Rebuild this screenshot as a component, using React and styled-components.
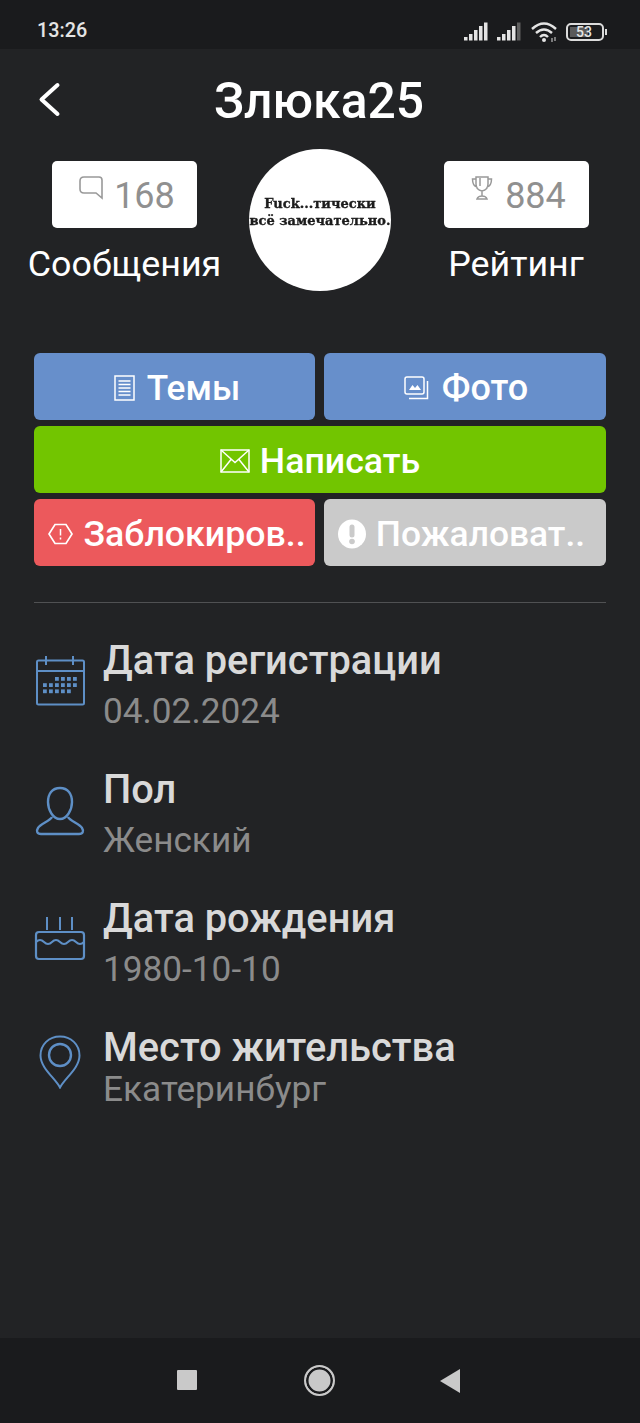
import React from "react";
import styled, { createGlobalStyle } from "styled-components";

const Global = createGlobalStyle`
  html, body { margin: 0; padding: 0; background: #222325; }
  * { box-sizing: border-box; }
  body { font-family: Roboto, "Liberation Sans", sans-serif; }
`;

const Page = styled.div`
  width: 640px; height: 1423px; display: flex; flex-direction: column;
  background: #222325; overflow: hidden;
`;
const StatusBar = styled.div`
  height: 49px; flex: none; background: #1a1b1d; display: flex; align-items: center;
  justify-content: space-between; padding: 0 32px 0 37px; color: #e4e4e4;
`;
const Clock = styled.span`font-size: 19.8px; font-weight: 500; position: relative; top: 6px;`;
const StatusIcons = styled.svg`position: relative; top: 6px; display: block;`;
const Header = styled.header`
  height: 100px; flex: none; display: flex; align-items: center; justify-content: center;
  padding: 4px 2px 0 0;
  position: relative;
`;
const BackButton = styled.svg`position: absolute; left: 37px; top: 31px;`;
const Title = styled.h1`margin: 0; font-size: 49.8px; line-height: 56px; font-weight: 500; color: #fff;`;
const Stats = styled.section`
  height: 142px; flex: none; display: grid; grid-template-columns: 249px 142px 249px;
`;
const StatColumn = styled.div`
  display: flex; flex-direction: column; align-items: center; padding-top: 12px;
  padding-left: ${p => p.$left}px;
`;
const StatCard = styled.div`
  width: 145px; height: 67px; background: #fff; border-radius: 5px; display: flex;
  align-items: center; justify-content: center; gap: ${p => p.$gap}px; color: #909090; font-size: 36px;
  padding: 3px 0 0 ${p => p.$pad}px;
`;
const StatIcon = styled.svg`position: relative; top: -8px; flex: none;`;
const StatLabel = styled.div`margin-top: 16px; font-size: 35.8px; line-height: 40px; color: #fff; white-space: nowrap;`;
const Avatar = styled.div`
  width: 142px; height: 142px; border-radius: 50%; background: #fff; overflow: hidden;
  display: flex; flex-direction: column; align-items: center; padding-top: 46px;
  color: #1c1c1c; font-family: "DejaVu Serif", "Liberation Serif", serif; font-weight: 700;
  font-size: 13px; line-height: 17px; white-space: nowrap;
`;
const AvatarLine = styled.span`filter: blur(0.75px); -webkit-text-stroke: 0.35px #1c1c1c;`;
const Buttons = styled.section`
  margin: 62px 34px 0; display: grid; grid-template-columns: 281px 282px; column-gap: 9px; row-gap: 6px;
`;
const Button = styled.div`
  grid-column: ${p => (p.$wide ? "1 / -1" : "auto")};
  height: 67px; border-radius: 6px; background: ${p => p.$bg}; color: #fff;
  display: flex; align-items: center; justify-content: center; gap: ${p => p.$gap || 10}px;
  font-size: ${p => p.$size || 35.7}px; font-weight: 500; white-space: nowrap; padding-top: 2px;
  padding-left: ${p => p.$shiftL || 0}px; padding-right: ${p => p.$shiftR || 0}px;
`;
const Divider = styled.hr`
  margin: 36px 34px 0; height: 1px; border: 0; background: #505153; flex: none;
`;
const InfoList = styled.section`margin-top: 29px; padding: 0 34px;`;
const InfoRow = styled.div`
  height: ${p => p.$h || 129}px; display: grid; grid-template-columns: 69px 1fr; align-items: start;
`;
const InfoIcon = styled.svg`display: block; margin-top: ${p => p.$top}px; margin-left: ${p => p.$left || 0}px;`;
const InfoText = styled.div`display: flex; flex-direction: column;`;
const InfoTitle = styled.div`font-size: 39.8px; line-height: 56px; font-weight: 500; color: #d9d9d9; white-space: nowrap; padding-top: 1px;`;
const InfoValue = styled.div`
  font-size: 35.2px; line-height: 44px; color: #8b8b8b; margin-top: ${p => p.$mt ?? 0}px;
`;
const NavBar = styled.nav`
  margin-top: auto; height: 85px; flex: none; background: #1a1b1d; position: relative;
`;
const NavSquare = styled.div`
  position: absolute; left: 177px; top: 32px; width: 20px; height: 20px; background: #c9c9c9; border-radius: 1px;
`;
const NavCircle = styled.div`
  position: absolute; left: 304px; top: 27px; width: 31px; height: 31px; border-radius: 50%;
  background: #c9c9c9; border: 2px solid #c9c9c9; box-shadow: inset 0 0 0 2.5px #1a1b1d;
`;
const NavBack = styled.svg`position: absolute; left: 439px; top: 30px;`;

const Icon = ({ children, w, h = w, top, left, color = "#5e8fc6", sw = 2 }) => (
  <InfoIcon width={w} height={h} viewBox={`0 0 ${w} ${h}`} fill="none" stroke={color} strokeWidth={sw} $top={top} $left={left}>{children}</InfoIcon>
);

const dots = [];
[[20, 26, 32, 38], [8, 14, 20, 26, 32, 38], [8, 14, 20, 26, 32]].forEach((xs, r) =>
  xs.forEach(x => dots.push(<rect key={`${r}-${x}`} x={x} y={21 + r * 6.2} width="3.8" height="3.8" fill="#5e8fc6" stroke="none" />))
);

const BtnIcon = ({ w, h, children, fill = "none" }) => (
  <svg width={w} height={h} viewBox={`0 0 ${w} ${h}`} fill={fill} stroke="#fff" strokeWidth="1.5" style={{ flex: "none" }}>{children}</svg>
);

export default function App() {
  return (
    <Page>
      <Global />
      <StatusBar>
        <Clock>13:26</Clock>
        <StatusIcons width="144" height="24" viewBox="0 0 144 24">
          <g fill="#e4e4e4">
            <rect x="0" y="18" width="3.5" height="3.5" /><rect x="5" y="15" width="3.5" height="6.5" /><rect x="10" y="11" width="3.5" height="10.5" /><rect x="15" y="7" width="3.5" height="14.5" /><rect x="20" y="3.5" width="3.5" height="18" />
            <rect x="33" y="18" width="3.5" height="3.5" /><rect x="38" y="15" width="3.5" height="6.5" /><rect x="43" y="11" width="3.5" height="10.5" /><rect x="48" y="7" width="3.5" height="14.5" />
            <rect x="53" y="3.5" width="3.5" height="18" fill="#5f5f5f" />
          </g>
          <g fill="none" stroke="#e4e4e4" strokeWidth="2.4">
            <path d="M68 10 Q80 -1 92 10" /><path d="M72 14 Q80 7 88 14" /><path d="M76 18 Q80 14 84 18" />
          </g>
          <circle cx="80" cy="21" r="2" fill="#e4e4e4" />
          <path d="M88 19 V23 M91 18 V22" stroke="#bbb" strokeWidth="1.2" />
          <rect x="103" y="5" width="36" height="16" rx="4" fill="none" stroke="#dcdcdc" strokeWidth="2" />
          <rect x="106" y="8" width="18" height="10" fill="#5a5a5a" />
          <rect x="141" y="10" width="2" height="6" fill="#dcdcdc" />
          <text x="120" y="18" textAnchor="middle" fontFamily="Roboto" fontSize="14" fontWeight="500" fill="#e4e4e4">53</text>
        </StatusIcons>
      </StatusBar>
      <Header>
        <BackButton width="26" height="40" viewBox="0 0 26 40" fill="none" stroke="#fff" strokeWidth="4" strokeLinecap="round" strokeLinejoin="round">
          <path d="M20.5 5 L4.5 19.5 L20.5 34" />
        </BackButton>
        <Title>Злюка25</Title>
      </Header>
      <Stats>
        <StatColumn $left={0}>
          <StatCard $gap={10} $pad={4}>
            <StatIcon width="26" height="26" viewBox="0 0 26 26" fill="none" stroke="#999" strokeWidth="1.6">
              <path d="M6 2 H21 Q24 2 24 5 V23 L18 18 H6 Q2 18 2 14 V6 Q2 2 6 2 Z" />
            </StatIcon>
            168
          </StatCard>
          <StatLabel>Сообщения</StatLabel>
        </StatColumn>
        <Avatar>
          <AvatarLine>Fuck...тически</AvatarLine>
          <AvatarLine>всё замечательно.</AvatarLine>
        </Avatar>
        <StatColumn $left={1}>
          <StatCard $gap={12} $pad={5}>
            <StatIcon width="22" height="26" viewBox="0 0 22 26" fill="none" stroke="#999" strokeWidth="1.5">
              <path d="M5 2 H17 V9 Q17 15 11 16 Q5 15 5 9 Z M5 4 H1.5 Q1.5 11 6 12 M17 4 H20.5 Q20.5 11 16 12 M11 16 V21 M6 24 Q7 21 11 21 Q15 21 16 24 Z M9 3 V11" />
            </StatIcon>
            884
          </StatCard>
          <StatLabel>Рейтинг</StatLabel>
        </StatColumn>
      </Stats>
      <Buttons>
        <Button $bg="#678fcb" $gap={12} $shiftL={5} $size={35.2}>
          <BtnIcon w="21" h="26">
            <rect x="1" y="1" width="19" height="24" />
            <path d="M4.5 6 H16.5 M4.5 9.5 H16.5 M4.5 13 H16.5 M4.5 16.5 H16.5 M4.5 20 H16.5" />
          </BtnIcon>
          Темы
        </Button>
        <Button $bg="#678fcb" $gap={13} $shiftL={2} $size={36}>
          <BtnIcon w="25" h="24">
            <rect x="1" y="1" width="19" height="17" rx="2" />
            <path d="M23.5 5 V22.5 H5" />
            <path d="M5 14 L8.5 9 L11 12 L13.5 9 L17 14 Z" fill="#fff" stroke="none" />
          </BtnIcon>
          Фото
        </Button>
        <Button $wide $bg="#72c500" $gap={10}>
          <BtnIcon w="30" h="24">
            <rect x="1" y="1" width="28" height="22" />
            <path d="M1 1 L15 13.5 L29 1 M1 23 L11 10.5 M29 23 L19 10.5" />
          </BtnIcon>
          Написать
        </Button>
        <Button $bg="#ec595c" $gap={10} $shiftL={5}>
          <BtnIcon w="25" h="22">
            <path d="M7 1.5 H18 L24 11 L18 20.5 H7 L1 11 Z" strokeWidth="1.7" />
            <path d="M12.5 6 V12.5 M12.5 14.5 V16.5" />
          </BtnIcon>
          Заблокиров..
        </Button>
        <Button $bg="#cacaca" $gap={10} $shiftR={7} $size={35.4}>
          <svg width="28" height="30" viewBox="0 0 28 30" style={{ flex: "none" }}>
            <ellipse cx="14" cy="15" rx="14" ry="14.5" fill="#fff" />
            <rect x="11.5" y="5.5" width="5" height="13" rx="2.5" fill="#cacaca" />
            <circle cx="14" cy="22.5" r="2.8" fill="#cacaca" />
          </svg>
          Пожаловат..
        </Button>
      </Buttons>
      <Divider />
      <InfoList>
        <InfoRow>
          <Icon w={50} h={50} top={24} left={1}>
            <rect x="2" y="4.5" width="47" height="44" rx="1.5" />
            <path d="M2 15 H49 M11 0 V9 M38 0 V9" />
            {dots}
          </Icon>
          <InfoText>
            <InfoTitle>Дата регистрации</InfoTitle>
            <InfoValue>04.02.2024</InfoValue>
          </InfoText>
        </InfoRow>
        <InfoRow>
          <Icon w={50} h={50} top={25} left={1} sw={2.4}>
            <path d="M25 2 C33 2 37 8 37 16 C37 24 32 33 25 33 C18 33 13 24 13 16 C13 8 17 2 25 2 Z" />
            <path d="M17 31 C15 35 5 38 3 42 C1 45 2 48 6 48 H44 C48 48 49 45 47 42 C45 38 35 35 33 31" />
          </Icon>
          <InfoText>
            <InfoTitle>Пол</InfoTitle>
            <InfoValue>Женский</InfoValue>
          </InfoText>
        </InfoRow>
        <InfoRow>
          <Icon w={52} h={44} top={27} left={0}>
            <path d="M13 0 V13 M26 0 V13 M38 0 V13" />
            <rect x="2" y="15" width="48" height="27" rx="3" strokeWidth="2.2" />
            <path d="M2 25 Q6 21 10 25 T18 25 T26 25 T34 25 T42 25 T50 25" />
          </Icon>
          <InfoText>
            <InfoTitle>Дата рождения</InfoTitle>
            <InfoValue>1980-10-10</InfoValue>
          </InfoText>
        </InfoRow>
        <InfoRow $h={90}>
          <Icon w={52} h={54} top={16} sw={2}>
            <path d="M26 52.5 C21 43 6.5 33 6.5 20.5 C6.5 9.5 15 1.5 26 1.5 C37 1.5 45.5 9.5 45.5 20.5 C45.5 33 31 43 26 52.5 Z" />
            <circle cx="26" cy="20" r="11" strokeWidth="2.4" />
          </Icon>
          <InfoText>
            <InfoTitle>Место жительства</InfoTitle>
            <InfoValue $mt={-9}>Екатеринбург</InfoValue>
          </InfoText>
        </InfoRow>
      </InfoList>
      <NavBar>
        <NavSquare />
        <NavCircle />
        <NavBack width="22" height="26" viewBox="0 0 22 26"><path d="M1 13 L21 1 V25 Z" fill="#c9c9c9" /></NavBack>
      </NavBar>
    </Page>
  );
}
